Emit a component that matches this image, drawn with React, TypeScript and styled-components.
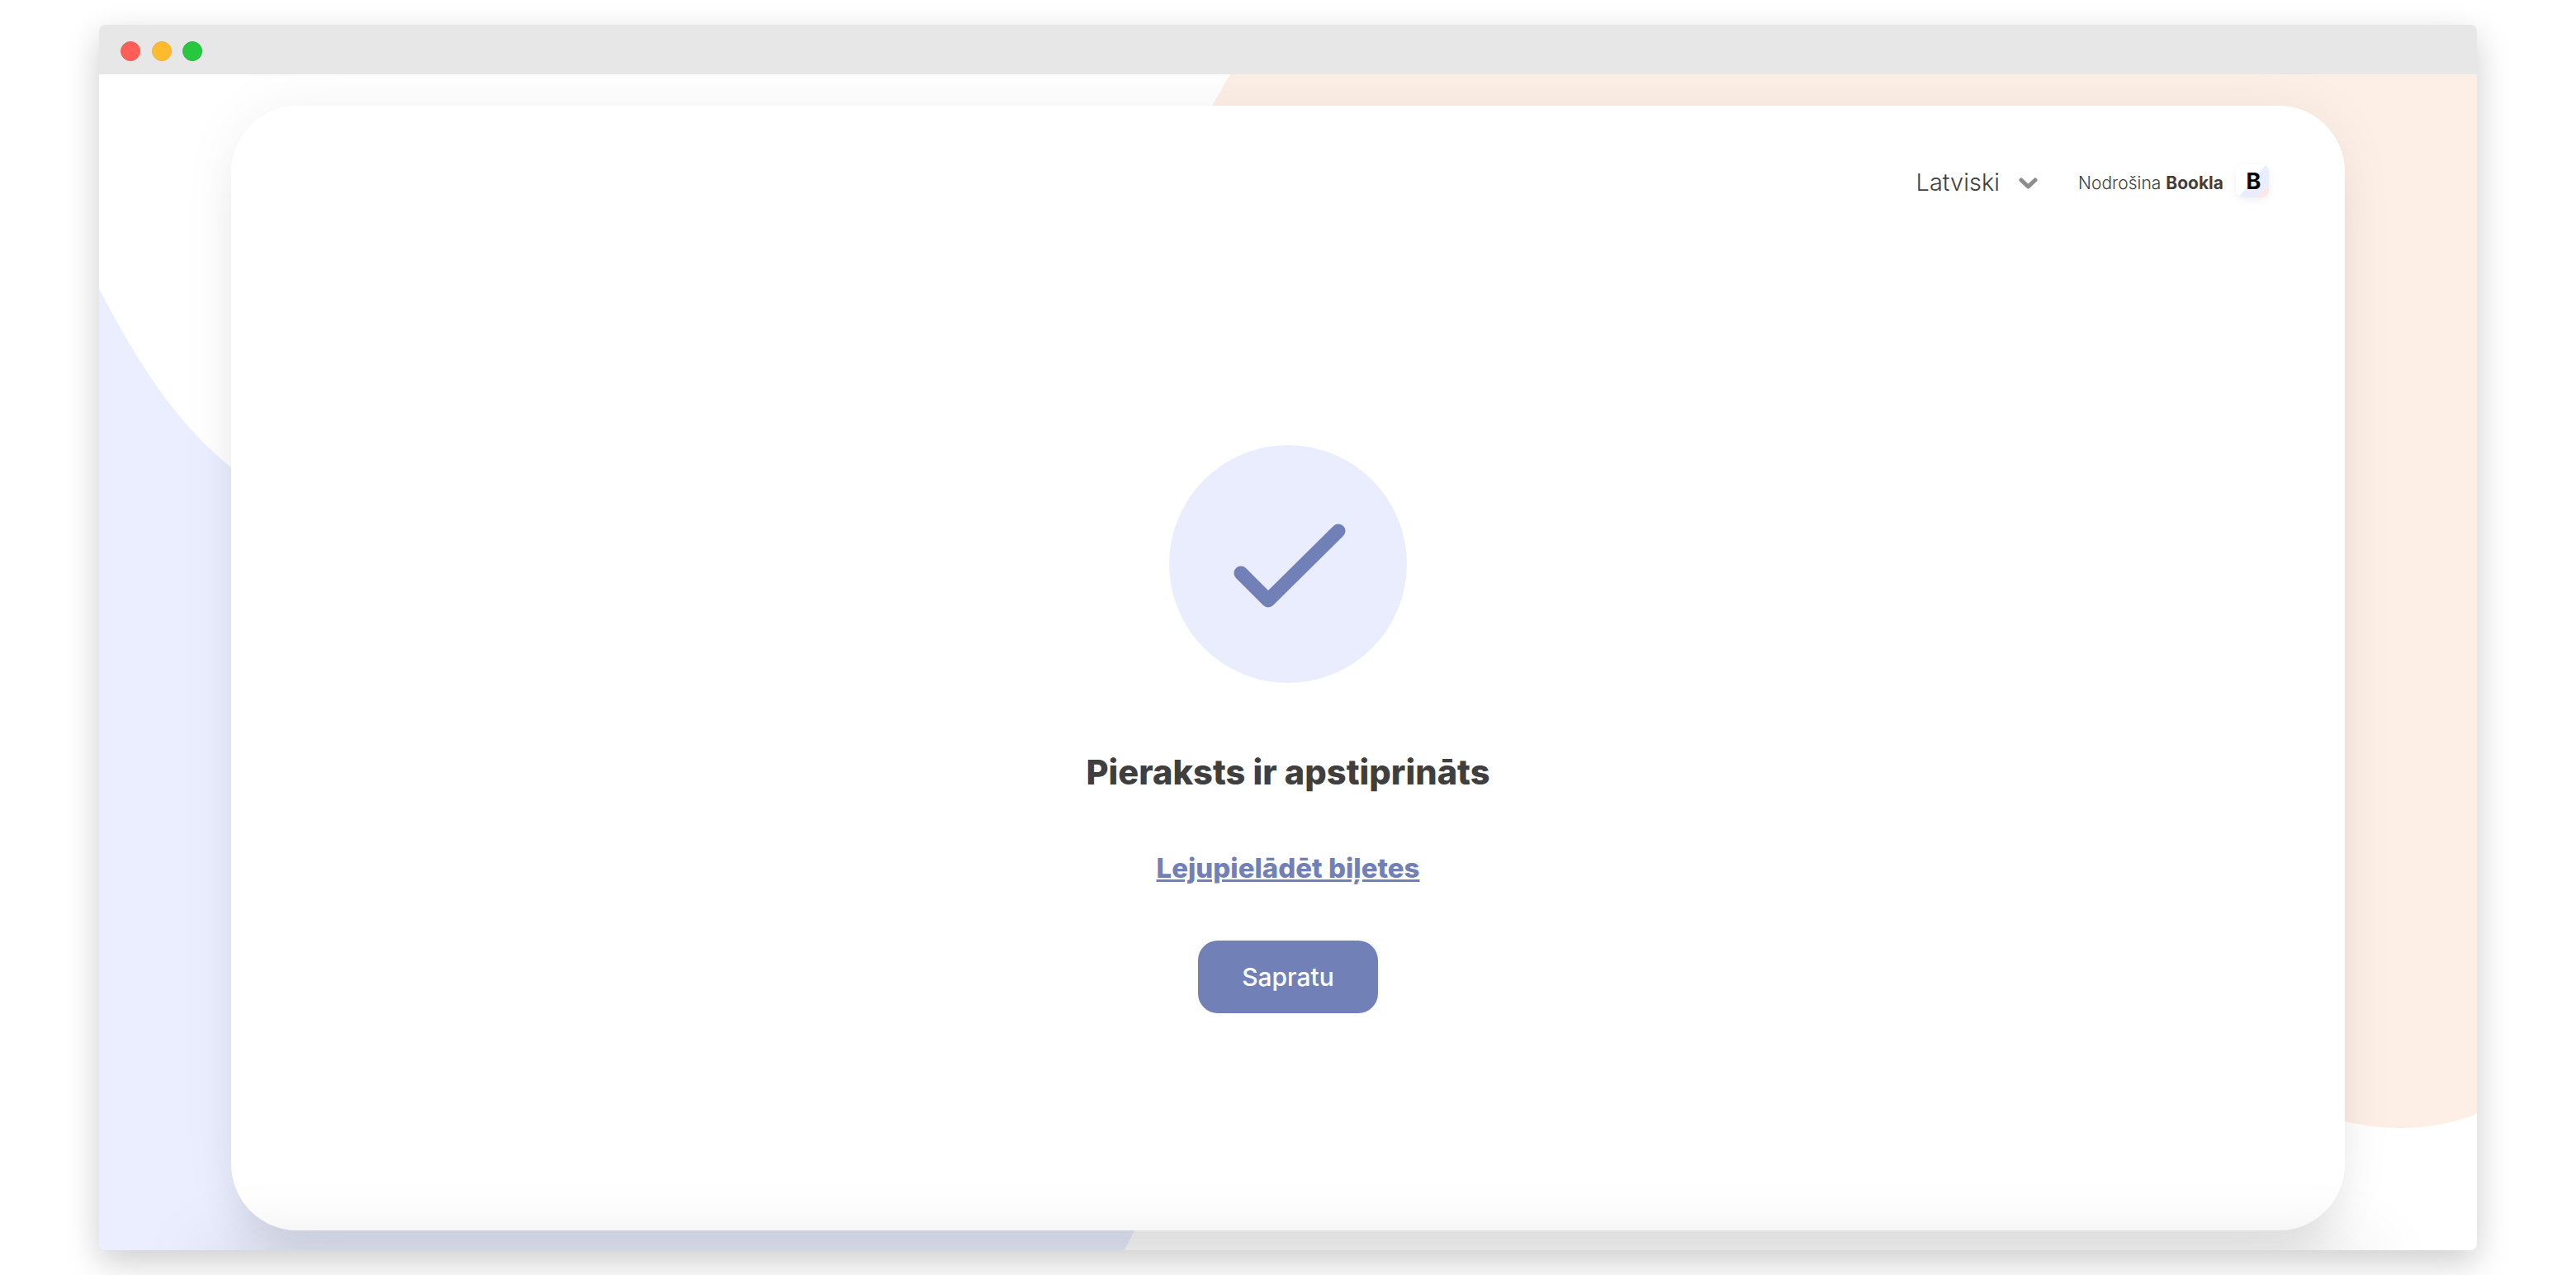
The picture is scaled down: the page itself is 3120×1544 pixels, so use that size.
import React from "react";
import styled, { createGlobalStyle } from "styled-components";

const FONT = `Inter, "Noto Sans", "Liberation Sans", sans-serif`;
const ACCENT = "#7181b7";
const TEXT = "#3f3f3f";

const GlobalStyle = createGlobalStyle`
  html, body {
    margin: 0;
    padding: 0;
    background: #fff;
    font-family: ${FONT};
    overflow: hidden;
  }
`;

const Page = styled.div`
  width: 3120px;
  height: 1544px;
  padding-top: 30px;
  box-sizing: border-box;
  overflow: hidden;
`;

const BrowserWindow = styled.div`
  position: relative;
  width: 2880px;
  height: 1484px;
  margin: 0 auto;
  border-radius: 8px;
  background: #fff;
  box-shadow: 0 14px 40px rgba(0, 0, 0, 0.2);
  overflow: hidden;
  display: flex;
  flex-direction: column;
`;

const TitleBar = styled.div`
  position: relative;
  z-index: 3;
  flex: 0 0 60px;
  box-sizing: border-box;
  display: flex;
  align-items: center;
  gap: 13.7px;
  padding: 4px 0 0 26px;
  background: #e7e7e7;
`;

const Light = styled.span<{ $fill: string; $edge: string }>`
  width: 24px;
  height: 24px;
  box-sizing: border-box;
  border-radius: 50%;
  background: ${({ $fill }) => $fill};
  border: 1px solid ${({ $edge }) => $edge};
`;

const Backdrop = styled.svg`
  position: absolute;
  left: 0;
  top: 0;
  width: 2880px;
  height: 1484px;
`;

const BottomShade = styled.div`
  position: absolute;
  z-index: 2;
  left: 140px;
  top: 1490px;
  width: 2600px;
  height: 60px;
  box-shadow: 0 0 90px 10px rgba(0, 0, 0, 0.1);
  pointer-events: none;
`;

const Stage = styled.main`
  position: relative;
  z-index: 1;
  flex: 1;
  padding: 38px 160px 24px;
`;

const Card = styled.section`
  height: 1362px;
  box-sizing: border-box;
  padding: 71px 92px 0;
  border-radius: 80px;
  background: #fff;
  box-shadow: 0 0 70px rgba(0, 0, 0, 0.05), 0 40px 50px -10px rgba(0, 0, 0, 0.08);
  display: flex;
  flex-direction: column;
`;

const CardHeader = styled.header`
  display: flex;
  justify-content: flex-end;
  align-items: center;
  height: 40px;
`;

const LanguagePicker = styled.div`
  display: flex;
  align-items: center;
  gap: 23px;
  margin-right: 49px;
  padding-top: 3px;
  font-size: 29px;
  font-weight: 300;
  color: ${TEXT};
`;

const Chevron = styled.svg`
  width: 23px;
  height: 14px;
  margin-top: 2px;
`;

const PoweredBy = styled.div`
  display: flex;
  align-items: center;
  gap: 15px;
  font-size: 21px;
  font-weight: 300;
  color: ${TEXT};

  strong {
    font-weight: 700;
  }
`;

const Attribution = styled.span`
  padding-top: 4px;
`;

const LogoMark = styled.div`
  position: relative;
  width: 40px;
  height: 40px;
  border-radius: 9px;
  box-shadow: 0 3px 8px rgba(120, 130, 190, 0.12);
  overflow: hidden;
  display: flex;
  align-items: center;
  justify-content: center;
  font-size: 27px;
  font-weight: 700;
  color: #000;
`;

const LogoArt = styled.svg`
  position: absolute;
  inset: 0;
  width: 40px;
  height: 40px;
`;

const LogoLetter = styled.span`
  position: relative;
  margin-left: 3px;
  line-height: 1;
`;

const Content = styled.div`
  display: flex;
  flex-direction: column;
  align-items: center;
  margin-top: 300px;
`;

const SuccessBadge = styled.div`
  width: 288px;
  height: 288px;
  border-radius: 50%;
  background: #e9edfd;
  display: flex;
  align-items: center;
  justify-content: center;
`;

const Heading = styled.h1`
  margin: 82px 0 0;
  font-size: 41.6px;
  line-height: 52px;
  font-weight: 800;
  color: ${TEXT};
`;

const DownloadLink = styled.a`
  margin-top: 68px;
  font-size: 33px;
  line-height: 44px;
  font-weight: 800;
  color: ${ACCENT};
  text-decoration: underline;
  cursor: pointer;
`;

const PrimaryButton = styled.button`
  margin-top: 66px;
  width: 218px;
  height: 88px;
  border: 0;
  border-radius: 24px;
  background: ${ACCENT};
  color: #fff;
  font-family: ${FONT};
  font-size: 30px;
  font-weight: 500;
  cursor: pointer;
`;

export default function App() {
  return (
    <>
      <GlobalStyle />
      <Page>
        <BrowserWindow>
          <Backdrop viewBox="0 0 2880 1484">
            <path
              fill="#fdefe5"
              d="M1370 60 L1348 98 L1600 1000 L2720 1328 C2742 1333 2765 1336 2787 1336 C2820 1336 2850 1330 2880 1319 L2880 0 L1370 0 Z"
            />
            <path
              fill="#eaeefe"
              d="M0 320 C45 405 90 480 160 536 C400 730 760 960 1254 1460 L1242 1484 L0 1484 Z"
            />
          </Backdrop>
          <TitleBar>
            <Light $fill="#ff5f57" $edge="#f25a53" />
            <Light $fill="#ffbb2e" $edge="#f0ae3a" />
            <Light $fill="#27c83f" $edge="#2bb542" />
          </TitleBar>
          <Stage>
            <Card>
              <CardHeader>
                <LanguagePicker>
                  Latviski
                  <Chevron viewBox="0 0 23 14">
                    <path
                      d="M3 3 L11.5 11 L20 3"
                      fill="none"
                      stroke="#8c8c8c"
                      strokeWidth="5"
                      strokeLinecap="round"
                      strokeLinejoin="round"
                    />
                  </Chevron>
                </LanguagePicker>
                <PoweredBy>
                  <Attribution>
                    Nodrošina <strong>Bookla</strong>
                  </Attribution>
                  <LogoMark>
                    <LogoArt viewBox="0 0 40 40">
                      <rect width="40" height="40" fill="#fff" />
                      <path d="M3 40 L37 0 L40 0 L40 26 L23 40 Z" fill="#e9edfd" />
                      <path d="M23 40 L40 26 L40 40 Z" fill="#fbe6ea" />
                    </LogoArt>
                    <LogoLetter>B</LogoLetter>
                  </LogoMark>
                </PoweredBy>
              </CardHeader>
              <Content>
                <SuccessBadge>
                  <svg width="140" height="110" viewBox="0 0 140 110">
                    <path
                      d="M13 66 L46 99 L131 15"
                      fill="none"
                      stroke={ACCENT}
                      strokeWidth="17"
                      strokeLinecap="round"
                      strokeLinejoin="round"
                    />
                  </svg>
                </SuccessBadge>
                <Heading>Pieraksts ir apstiprināts</Heading>
                <DownloadLink>Lejupielādēt biļetes</DownloadLink>
                <PrimaryButton>Sapratu</PrimaryButton>
              </Content>
            </Card>
          </Stage>
          <BottomShade />
        </BrowserWindow>
      </Page>
    </>
  );
}
